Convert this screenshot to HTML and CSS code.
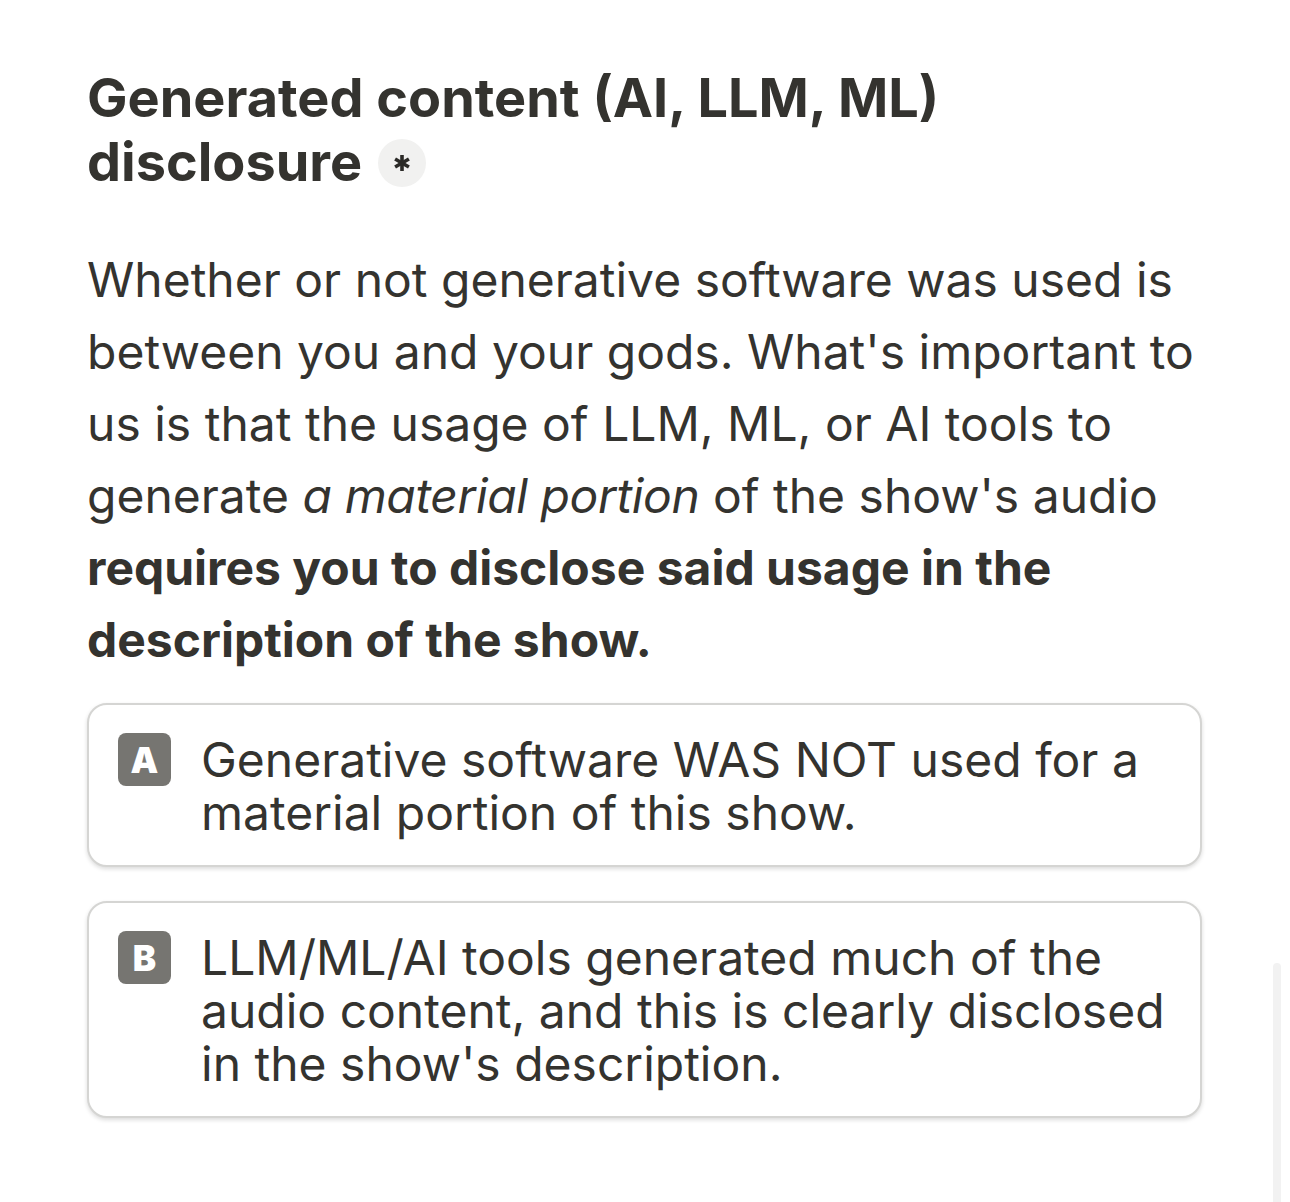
FILE: index.html
```html
<!DOCTYPE html>
<html>
<head>
<meta charset="utf-8">
<link rel="stylesheet" href="styles.css">
</head>
<body>
<main class="page">
  <h1 class="title">Generated content (AI, LLM, ML) disclosure <span class="req"><svg width="20" height="20" viewBox="0 0 20 20"><g stroke="#2b2a27" stroke-width="3.6" stroke-linecap="butt"><line x1="10" y1="2" x2="10" y2="18"/><line x1="3.1" y1="6" x2="16.9" y2="14"/><line x1="3.1" y1="14" x2="16.9" y2="6"/></g></svg></span></h1>
  <p class="desc">Whether or not generative software was used is between you and your gods. What's important to us is that the usage of LLM, ML, or AI tools to generate <em>a material portion</em> of the show's audio <strong>requires you to disclose said usage in the description of the show.</strong></p>
  <div class="options">
    <div class="option">
      <span class="key">A</span>
      <span class="label">Generative software WAS NOT used for a material portion of this show.</span>
    </div>
    <div class="option">
      <span class="key">B</span>
      <span class="label">LLM/ML/AI tools generated much of the audio content, and this is clearly disclosed in the show's description.</span>
    </div>
  </div>
</main>
<div class="scrollbar"></div>
</body>
</html>
```
FILE: styles.css
```css
html, body {
  margin: 0;
  padding: 0;
  background: #ffffff;
}
body {
  font-family: Inter, "Noto Sans", sans-serif;
  color: #34332f;
  width: 1290px;
  height: 1202px;
  overflow: hidden;
  position: relative;
}
.page {
  padding: 66px 0 0 87px;
  width: 1115px;
}
.title {
  margin: 0;
  font-size: 54px;
  font-weight: 700;
  line-height: 64px;
  letter-spacing: 0;
  max-width: 1114px;
}
.req {
  display: inline-block;
  width: 48px;
  height: 48px;
  border-radius: 50%;
  background: #f1f1f0;
  vertical-align: -6px;
  margin-left: 3px;
}
.req svg {
  display: block;
  margin: 14px;
}
.desc {
  margin: 50px 0 0 0;
  font-size: 48px;
  line-height: 72px;
  font-weight: 400;
  max-width: 1114px;
}
.desc em { letter-spacing: -0.4px; }
.desc strong { font-weight: 700; }
.options {
  margin-top: 27px;
  display: flex;
  flex-direction: column;
  gap: 34px;
}
.option {
  display: flex;
  align-items: flex-start;
  gap: 30px;
  border: 2px solid #d5d5d3;
  border-radius: 20px;
  padding: 27px 30px 26px 29px;
  box-shadow: 0 2px 4px rgba(0,0,0,0.14);
  background: #fff;
}
.key {
  flex: none;
  width: 53px;
  height: 53px;
  border-radius: 8px;
  background: #767571;
  color: #fff;
  font-weight: 900;
  font-size: 35px;
  display: flex;
  align-items: center;
  justify-content: center;
  margin-top: 1px;
}
.label {
  font-size: 48px;
  line-height: 53px;
  padding-top: 1px;
}
.scrollbar {
  position: absolute;
  right: 9px;
  top: 963px;
  width: 8px;
  height: 239px;
  background: #f2f2f2;
  border-radius: 4px 4px 0 0;
}
```
